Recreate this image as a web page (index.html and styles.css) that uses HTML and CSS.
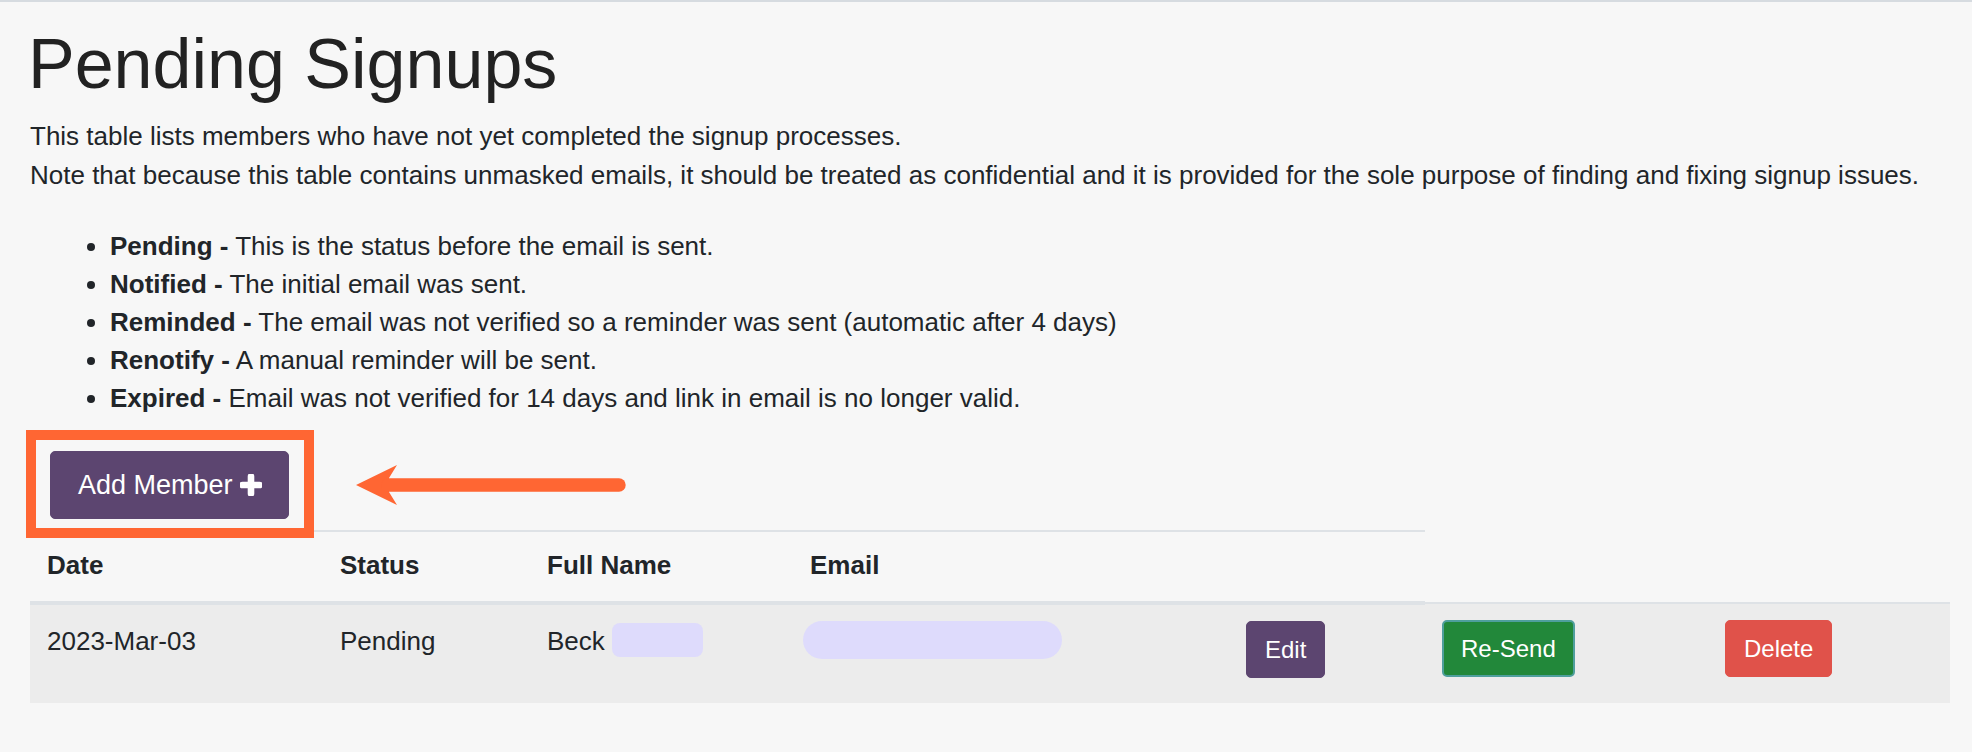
FILE: index.html
```html
<!DOCTYPE html>
<html lang="en">
<head>
<meta charset="utf-8">
<title>Pending Signups</title>
<link rel="stylesheet" href="styles.css">
</head>
<body>
<div class="topbar"></div>
<main class="page">
  <h1 class="title">Pending Signups</h1>
  <p class="intro">This table lists members who have not yet completed the signup processes.<br>Note that because this table contains unmasked emails, it should be treated as confidential and it is provided for the sole purpose of finding and fixing signup issues.</p>
  <ul class="status-list">
    <li><strong>Pending -</strong> This is the status before the email is sent.</li>
    <li><strong>Notified -</strong> The initial email was sent.</li>
    <li><strong>Reminded -</strong> The email was not verified so a reminder was sent (automatic after 4 days)</li>
    <li><strong>Renotify -</strong> A manual reminder will be sent.</li>
    <li><strong>Expired -</strong> Email was not verified for 14 days and link in email is no longer valid.</li>
  </ul>
  <div class="actions">
    <button class="btn btn-add">Add Member <svg class="plus" viewBox="0 0 22 22" width="22" height="22" aria-hidden="true"><path d="M11 2.5v17M2.5 11h17" stroke="#fff" stroke-width="6.6" stroke-linecap="round" fill="none"/></svg></button>
    <span class="highlight"></span>
    <svg class="arrow" viewBox="0 0 272 42" width="272" height="42" aria-hidden="true">
      <path d="M0 21 L41 1 L33 14 L33 28 L41 41 Z" fill="#ff6633"/>
      <line x1="32" y1="21" x2="263" y2="21" stroke="#ff6633" stroke-width="13.4" stroke-linecap="round"/>
    </svg>
  </div>
  <table class="signups">
    <colgroup>
      <col class="c-date"><col class="c-status"><col class="c-name"><col class="c-email"><col class="c-edit"><col class="c-resend"><col class="c-delete">
    </colgroup>
    <thead>
      <tr>
        <th>Date</th>
        <th>Status</th>
        <th>Full Name</th>
        <th>Email</th>
        <th></th>
      </tr>
    </thead>
    <tbody>
      <tr class="data-row">
        <td>2023-Mar-03</td>
        <td>Pending</td>
        <td>Beck <span class="blur blur-name"></span></td>
        <td><span class="blur blur-email"></span></td>
        <td><button class="btn btn-edit">Edit</button></td>
        <td><button class="btn btn-resend">Re-Send</button></td>
        <td><button class="btn btn-delete">Delete</button></td>
      </tr>
    </tbody>
  </table>
</main>
</body>
</html>
```

FILE: styles.css
```css
html, body {
  margin: 0;
  padding: 0;
  background: #f7f7f7;
}

body {
  font-family: "Liberation Sans", Arial, Helvetica, sans-serif;
  font-size: 26px;
  color: #212529;
}

.topbar {
  height: 2px;
  background: #d6dbe0;
}

.page {
  padding: 20px 22px 0 30px;
}

.title {
  margin: 0 0 11px -2px;
  font-size: 70px;
  font-weight: 400;
  line-height: 84px;
  color: #222222;
}

.intro {
  margin: 0 0 32px;
  line-height: 39px;
}

.status-list {
  margin: 0 0 34px;
  padding-left: 80px;
}

.status-list li {
  line-height: 38px;
}

.status-list strong {
  font-weight: 700;
}

.actions {
  position: relative;
  height: 68px;
  margin-bottom: 11px;
}

.btn {
  font-family: "Liberation Sans", Arial, Helvetica, sans-serif;
  color: #ffffff;
  border: 1px solid transparent;
  border-radius: 5px;
  cursor: pointer;
}

.btn-add {
  display: inline-flex;
  align-items: center;
  gap: 7px;
  height: 68px;
  padding: 0 26px 0 27px;
  font-size: 27px;
  background: #5c4570;
  border-color: #5c4570;
  margin-left: 20px;
}

.plus {
  display: block;
  margin-top: -1px;
}

.highlight {
  position: absolute;
  left: -4px;
  top: -21px;
  width: 288px;
  height: 108px;
  box-sizing: border-box;
  border: 10px solid #ff6633;
  pointer-events: none;
}

.arrow {
  position: absolute;
  left: 326px;
  top: 13px;
}

.signups {
  width: 100%;
  table-layout: fixed;
  border-collapse: collapse;
}

.c-date { width: 293px; }
.c-status { width: 207px; }
.c-name { width: 263px; }
.c-email { width: 436px; }
.c-edit { width: 196px; }
.c-resend { width: 283px; }
.c-delete { width: 242px; }

.signups th {
  text-align: left;
  font-weight: 700;
  line-height: 39px;
  padding: 14px 17px 16px;
  border-top: 2px solid #dee2e6;
  border-bottom: 4px solid #dee2e6;
}

.signups td {
  line-height: 39px;
  padding: 17px 17px 0;
  vertical-align: top;
  border-top: 2px solid #dee2e6;
  background: #ececec;
}

.data-row {
  height: 100px;
}

.blur {
  display: inline-block;
  vertical-align: top;
  background: #dedbfc;
}

.blur-name {
  width: 91px;
  height: 34px;
  margin-top: 1px;
  border-radius: 8px;
}

.blur-email {
  width: 259px;
  height: 38px;
  margin-top: -1px;
  margin-left: -7px;
  border-radius: 19px;
}

.btn-edit,
.btn-resend,
.btn-delete {
  display: inline-block;
  vertical-align: top;
  margin-top: -1px;
  font-size: 24px;
  line-height: 36px;
  padding: 9.5px 18px;
}

.btn-edit {
  background: #5c4570;
  border-color: #5c4570;
}

.btn-resend {
  background: #22883a;
  border: 2px solid #4f9f9d;
  padding: 8.5px 17px;
}

.btn-delete {
  background: #e0524a;
  border-color: #e0524a;
}
```
